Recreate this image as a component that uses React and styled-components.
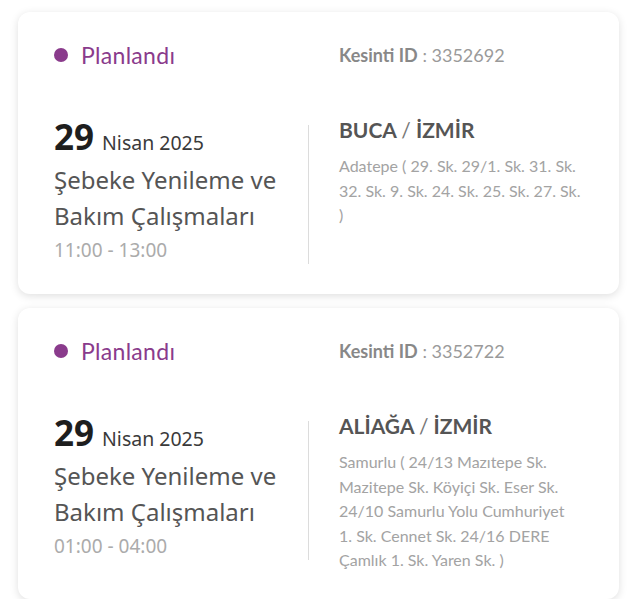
import React from 'react';
import styled, { createGlobalStyle } from 'styled-components';

const GlobalStyle = createGlobalStyle`
    html, body {
        margin: 0;
        padding: 0;
        background: #ffffff;
    }
`;

const Page = styled.div`
    width: 632px;
    padding: 12px 13px 0 18px;
    box-sizing: border-box;
    display: flex;
    flex-direction: column;
    gap: 14px;
`;

const Card = styled.div`
    background: #ffffff;
    border-radius: 12px;
    box-shadow: 0 2px 8px rgba(0, 0, 0, 0.13);
    padding: 30px 36px;
    box-sizing: border-box;
`;

const Row = styled.div`
    display: flex;
    align-items: ${p => p.$align || 'flex-start'};
`;

const HeaderRow = styled(Row)`
    height: 26px;
    margin-bottom: ${p => p.$gap}px;
`;

const Status = styled.div`
    width: 285px;
    display: flex;
    align-items: center;
    gap: 13px;
    font-family: "Lato", sans-serif;
    font-size: 23px;
    letter-spacing: 0.3px;
    line-height: 26px;
    color: #8a3b8c;
`;

const Dot = styled.span`
    width: 14px;
    height: 14px;
    border-radius: 50%;
    background: #8a3b8c;
    flex-shrink: 0;
`;

const OutageId = styled.div`
    font-family: "Lato", sans-serif;
    font-size: 18px;
    line-height: 22px;
    color: #9a9a9a;
    b {
        font-weight: 700;
        color: #888888;
    }
`;

const LeftCol = styled.div`
    width: 254px;
    border-right: 1px solid #dcdcdc;
    font-family: "Noto Sans", sans-serif;
`;

const DateLine = styled.div`
    line-height: 24px;
    margin-bottom: 7px;
    color: #3a3a3a;
    font-size: 19.5px;
`;

const Day = styled.span`
    font-size: 35px;
    font-weight: 700;
    color: #1e1e1e;
    margin-right: 8px;
`;

const Title = styled.div`
    font-size: 24px;
    line-height: 36px;
    color: #555555;
`;

const Time = styled.div`
    font-size: 19px;
    line-height: 28px;
    margin-top: 2px;
    color: #ababab;
`;

const RightCol = styled.div`
    flex: 1;
    padding-left: 30px;
    font-family: "Lato", sans-serif;
    margin-top: -8px;
    margin-bottom: -4px;
`;

const District = styled.div`
    font-size: 21px;
    line-height: 26px;
    font-weight: 700;
    color: #555555;
    margin-bottom: 11px;
    span {
        font-weight: 400;
        color: #777777;
    }
`;

const Address = styled.div`
    font-size: 16px;
    line-height: 24.5px;
    color: #a3a3a3;
`;

const AddressLine = styled.span`
    display: block;
`;

const outages = [
    {
        id: '3352692',
        day: '29',
        month: 'Nisan 2025',
        title: 'Şebeke Yenileme ve Bakım Çalışmaları',
        time: '11:00 - 13:00',
        district: 'BUCA',
        city: 'İZMİR',
        address: [
            'Adatepe ( 29. Sk. 29/1. Sk. 31. Sk.',
            '32. Sk. 9. Sk. 24. Sk. 25. Sk. 27. Sk.',
            ')',
        ],
    },
    {
        id: '3352722',
        day: '29',
        month: 'Nisan 2025',
        title: 'Şebeke Yenileme ve Bakım Çalışmaları',
        time: '01:00 - 04:00',
        district: 'ALİAĞA',
        city: 'İZMİR',
        address: [
            'Samurlu ( 24/13 Mazıtepe Sk.',
            'Mazitepe Sk. Köyiçi Sk. Eser Sk.',
            '24/10 Samurlu Yolu Cumhuriyet',
            '1. Sk. Cennet Sk. 24/16 DERE',
            'Çamlık 1. Sk. Yaren Sk. )',
        ],
    },
];

const App = () => {
    return (
        <>
            <GlobalStyle />
            <Page>
                {outages.map((item) => (
                    <Card key={item.id}>
                        <HeaderRow $align="center" $gap={57}>
                            <Status>
                                <Dot />
                                Planlandı
                            </Status>
                            <OutageId>
                                <b>Kesinti ID</b> : {item.id}
                            </OutageId>
                        </HeaderRow>
                        <Row>
                            <LeftCol>
                                <DateLine>
                                    <Day>{item.day}</Day>
                                    {item.month}
                                </DateLine>
                                <Title>{item.title}</Title>
                                <Time>{item.time}</Time>
                            </LeftCol>
                            <RightCol>
                                <District>
                                    {item.district} <span>/</span> {item.city}
                                </District>
                                <Address>
                                    {item.address.map((line, i) => (
                                        <AddressLine key={i}>{line}</AddressLine>
                                    ))}
                                </Address>
                            </RightCol>
                        </Row>
                    </Card>
                ))}
            </Page>
        </>
    );
};

export default App;
